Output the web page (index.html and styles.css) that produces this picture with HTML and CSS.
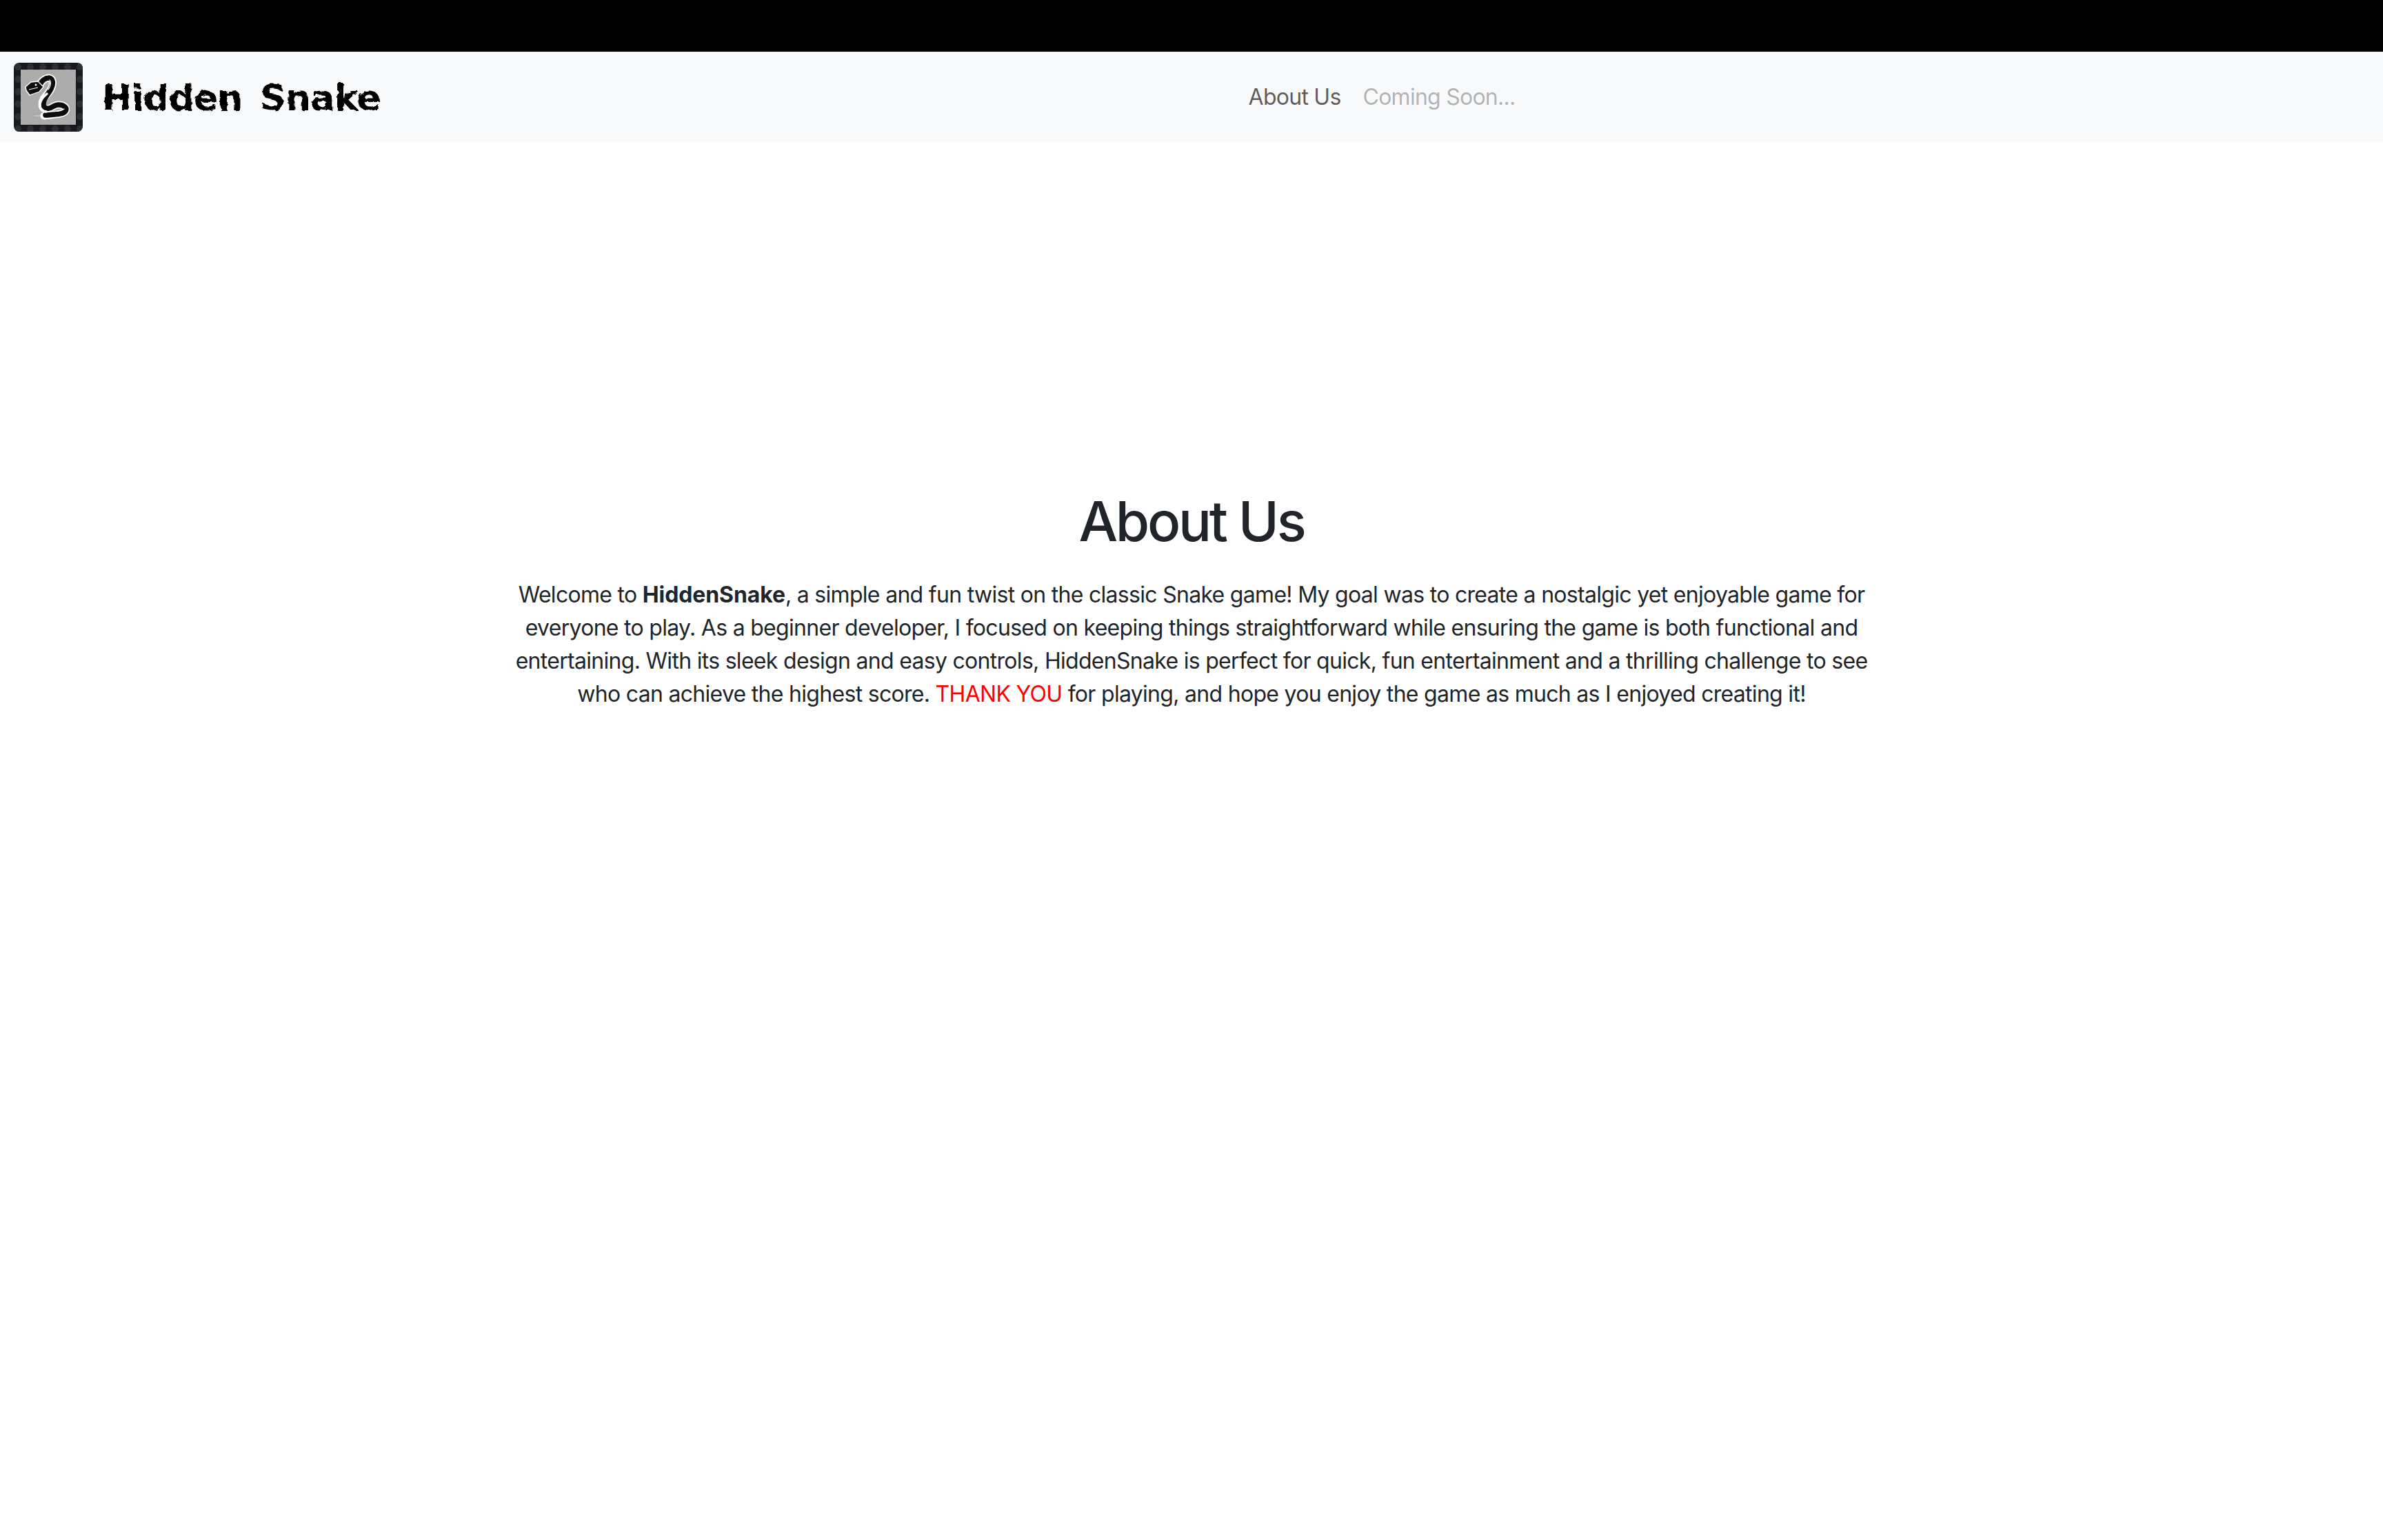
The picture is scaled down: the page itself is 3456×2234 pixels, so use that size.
FILE: index.html
```html
<!DOCTYPE html>
<html lang="en">
<head>
<meta charset="utf-8">
<title>Hidden Snake</title>
<link rel="stylesheet" href="styles.css">
</head>
<body>
<div class="topbar"></div>
<nav class="navbar">
  <a class="brand" href="#">
    <svg class="logo" viewBox="0 0 100 100" aria-hidden="true">
      <defs>
        <pattern id="dots" x="-3" y="-3" width="18" height="18" patternUnits="userSpaceOnUse">
          <circle cx="9" cy="9" r="5" fill="#2b2e33"/>
        </pattern>
        <filter id="soft"><feGaussianBlur stdDeviation="0.3"/></filter>
      </defs>
      <rect width="100" height="100" rx="8" fill="#17191c"/>
      <rect width="100" height="100" rx="8" fill="url(#dots)"/>
      <rect x="10" y="10" width="80" height="80" fill="#acacac"/>
      <g fill="none" stroke-linecap="round" stroke-linejoin="round" filter="url(#soft)">
        <path d="M30 77H48" stroke="#d8d8d8" stroke-width="1"/>
        <path d="M38 32C40 26 46 22 51 22C57 23 58 30 54 38C50 46 41 51 41 60C41 67 47 68 52 66C57 64 60 61 65 61C72 61 78 65 75 70C72 75 60 75 44 77" stroke="#fff" stroke-width="11"/>
        <path d="M38 32C40 26 46 22 51 22C57 23 58 30 54 38C50 46 43 51 43 60C43 66 48 67 52 66C57 64 60 61 65 61C72 61 78 65 75 70C72 75 60 75 46 76" stroke="#0a0a0a" stroke-width="7.5"/>
        <path d="M52 25C55 29 53 35 50 39" stroke="#fff" stroke-width="1.2"/>
        <path d="M48 45C42 50 37 57 38 64C39 68 43 71 47 71" stroke="#fff" stroke-width="3.5"/>
        <path d="M52 70C60 71 69 70 73 67" stroke="#fff" stroke-width="1.2"/>
      </g>
      <path d="M17 35L25 28L35 27L43 35L37 42L23 47L18 40Z" fill="#0a0a0a" stroke="#fff" stroke-width="1.3" stroke-linejoin="round" filter="url(#soft)"/>
      <circle cx="32" cy="32" r="1.5" fill="#fff"/>
      <path d="M22 39L35 36" stroke="#fff" stroke-width="1"/>
    </svg>
    <span class="brand-name">Hidden Snake</span>
  </a>
  <ul class="nav-links">
    <li><a class="nav-link" href="#">About Us</a></li>
    <li><a class="nav-link disabled" href="#">Coming Soon...</a></li>
  </ul>
</nav>
<svg class="filters" width="0" height="0" aria-hidden="true">
  <filter id="rough" x="-5%" y="-20%" width="110%" height="140%">
    <feTurbulence type="fractalNoise" baseFrequency="0.12" numOctaves="2" seed="4" result="n"/>
    <feDisplacementMap in="SourceGraphic" in2="n" scale="6"/>
  </filter>
</svg>
<main class="about">
  <h1>About Us</h1>
  <p>Welcome to <strong>HiddenSnake</strong>, a simple and fun twist on the classic Snake game! My goal was to create a nostalgic yet enjoyable game for everyone to play. As a beginner developer, I focused on keeping things straightforward while ensuring the game is both functional and entertaining. With its sleek design and easy controls, HiddenSnake is perfect for quick, fun entertainment and a thrilling challenge to see who can achieve the highest score. <span class="thanks">THANK YOU</span> for playing, and hope you enjoy the game as much as I enjoyed creating it!</p>
</main>
</body>
</html>
```
FILE: styles.css
```css
* { box-sizing: border-box; }
html, body { margin: 0; padding: 0; }
body {
  background: #fff;
  color: #212529;
  font-family: Inter, "Liberation Sans", sans-serif;
  font-size: 32px;
  line-height: 1.5;
  letter-spacing: -0.7px;
}
.topbar { height: 75px; background: #000; }
.navbar {
  display: flex;
  align-items: center;
  height: 131px;
  padding: 0 20px;
  background: #f8f9fa;
}
.brand {
  display: flex;
  align-items: center;
  gap: 28px;
  width: 552px;
  color: #000;
  text-decoration: none;
}
.logo { width: 100px; height: 100px; display: block; flex: none; }
.brand-name {
  padding-top: 3px;
  font-family: "DejaVu Sans", sans-serif;
  font-weight: 700;
  font-size: 52px;
  line-height: 1;
  letter-spacing: -0.7px;
  word-spacing: 8px;
  white-space: nowrap;
  filter: url(#rough);
}
.nav-links {
  display: flex;
  flex: 1;
  justify-content: center;
  gap: 32px;
  list-style: none;
  margin: 0;
  padding: 0;
  letter-spacing: -0.75px;
}
.nav-link { color: rgba(0, 0, 0, 0.65); text-decoration: none; }
.nav-link.disabled { color: rgba(0, 0, 0, 0.3); }
.filters { position: absolute; }
.about {
  width: 2000px;
  margin: 0 auto;
  padding-top: 502px;
  text-align: center;
}
h1 {
  margin: 0 0 35px;
  font-size: 80px;
  font-weight: 500;
  line-height: 1.2;
  letter-spacing: -3.3px;
}
p { margin: 0; }
.thanks { color: #f00; }
strong { font-weight: 700; letter-spacing: -0.1px; }
```
